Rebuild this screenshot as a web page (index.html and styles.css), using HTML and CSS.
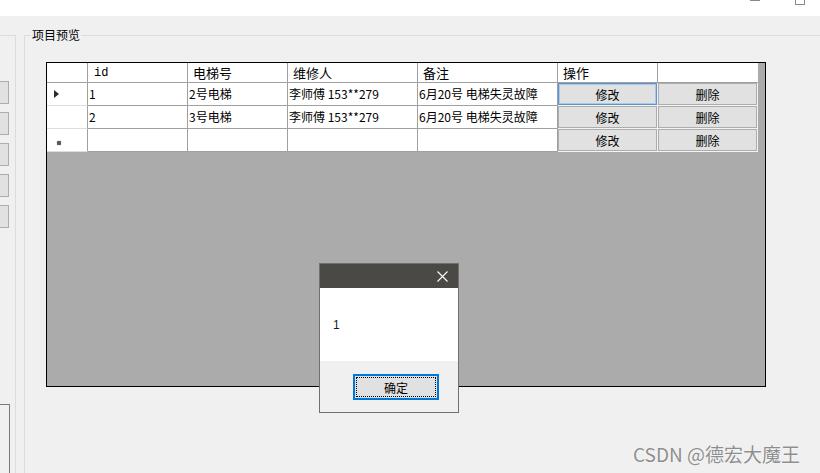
FILE: index.html
```html
<!DOCTYPE html>
<html>
<head>
    <meta charset="utf-8">
    <link rel="stylesheet" href="styles.css">
</head>
<body>
    <div class="window">
        <!-- Caption strip (window controls cut off at the top) -->
        <div class="caption">
            <span class="cap-min"></span>
            <span class="cap-max"></span>
        </div>

        <div class="workspace">
            <!-- Left panel, mostly off screen -->
            <div class="side-panel">
                <div class="side-buttons">
                    <span class="side-btn"></span>
                    <span class="side-btn"></span>
                    <span class="side-btn"></span>
                    <span class="side-btn"></span>
                    <span class="side-btn"></span>
                </div>
                <div class="side-textbox"></div>
            </div>

            <!-- Group box with the data grid -->
            <div class="group-box">
                <div class="group-title">项目预览</div>
                <div class="grid-view">
                    <div class="grid-row grid-header">
                        <div class="cell row-head"></div>
                        <div class="cell mono">id</div>
                        <div class="cell">电梯号</div>
                        <div class="cell">维修人</div>
                        <div class="cell">备注</div>
                        <div class="cell">操作</div>
                        <div class="cell last"></div>
                    </div>
                    <div class="grid-row">
                        <div class="cell row-head"><span class="current-mark"></span></div>
                        <div class="cell">1</div>
                        <div class="cell">2号电梯</div>
                        <div class="cell">李师傅 153**279</div>
                        <div class="cell">6月20号 电梯失灵故障</div>
                        <div class="cell btn-cell"><button class="grid-btn focused">修改</button></div>
                        <div class="cell btn-cell"><button class="grid-btn">删除</button></div>
                    </div>
                    <div class="grid-row">
                        <div class="cell row-head"></div>
                        <div class="cell">2</div>
                        <div class="cell">3号电梯</div>
                        <div class="cell">李师傅 153**279</div>
                        <div class="cell">6月20号 电梯失灵故障</div>
                        <div class="cell btn-cell"><button class="grid-btn">修改</button></div>
                        <div class="cell btn-cell"><button class="grid-btn">删除</button></div>
                    </div>
                    <div class="grid-row">
                        <div class="cell row-head"><span class="new-mark"></span></div>
                        <div class="cell"></div>
                        <div class="cell"></div>
                        <div class="cell"></div>
                        <div class="cell"></div>
                        <div class="cell btn-cell"><button class="grid-btn">修改</button></div>
                        <div class="cell btn-cell"><button class="grid-btn">删除</button></div>
                    </div>
                </div>
            </div>
        </div>

        <!-- MessageBox.Show("1") -->
        <div class="msg-box">
            <div class="msg-title">
                <svg width="11" height="11" viewBox="0 0 11 11">
                    <path d="M0.5 0.5 L10.5 10.5 M10.5 0.5 L0.5 10.5" stroke="#fff" stroke-width="1.1" fill="none"/>
                </svg>
            </div>
            <div class="msg-body">1</div>
            <div class="msg-footer">
                <button class="msg-btn"><span>确定</span></button>
            </div>
        </div>

        <div class="watermark">CSDN @德宏大魔王</div>
    </div>
</body>
</html>
```

FILE: styles.css
```css
body {
    margin: 0;
    background: #f0f0f0;
    font-family: "Noto Sans CJK SC", "Noto Sans", sans-serif;
    font-size: 12px;
    line-height: 16px;
    color: #000;
}

.window {
    position: relative;
    width: 820px;
    height: 473px;
    overflow: hidden;
}

/* caption strip */
.caption {
    height: 16px;
    background: #fff;
    display: flex;
    align-items: flex-start;
    justify-content: flex-end;
    padding-right: 15px;
}

.cap-min {
    width: 10px;
    height: 1px;
    background: #8a8a8a;
    margin-right: 35px;
}

.cap-max {
    width: 10px;
    height: 10px;
    margin-top: -5px;
    border: 1px solid #8a8a8a;
    box-sizing: border-box;
}

.workspace {
    display: flex;
    height: 457px;
    padding-top: 19px;
    box-sizing: border-box;
}

/* left panel */
.side-panel {
    width: 16px;
    flex-shrink: 0;
    border-top: 1px solid #dcdcdc;
    border-right: 1px solid #dcdcdc;
    box-sizing: border-box;
    display: flex;
    flex-direction: column;
}

.side-buttons {
    display: flex;
    flex-direction: column;
    gap: 8px;
    padding-top: 45px;
}

.side-btn {
    display: block;
    width: 9px;
    height: 23px;
    box-sizing: border-box;
    background: #e1e1e1;
    border: 1px solid #adadad;
    border-left: none;
}

.side-textbox {
    margin-top: auto;
    width: 10px;
    height: 69px;
    box-sizing: border-box;
    border-top: 1px solid #7a7a7a;
    border-right: 1px solid #7a7a7a;
}

/* group box */
.group-box {
    flex: 1;
    margin-left: 8px;
    margin-right: -20px;
    margin-bottom: -20px;
    border: 1px solid #dcdcdc;
}

.group-title {
    width: fit-content;
    margin: -9px 0 0 6px;
    padding: 0 1px;
    background: #f0f0f0;
}

/* data grid */
.grid-view {
    width: 720px;
    height: 325px;
    margin: 19px 0 0 21px;
    box-sizing: border-box;
    border: 1px solid #000;
    background: #ababab;
}

.grid-row {
    display: grid;
    grid-template-columns: 41px 100px 100px 130px 140px 100px 100px;
    height: 23px;
}

.grid-row.grid-header {
    height: 20px;
}

.cell {
    box-sizing: border-box;
    display: flex;
    align-items: center;
    padding: 0 1px;
    background: #fff;
    border-right: 1px solid #a0a0a0;
    border-bottom: 1px solid #a0a0a0;
    white-space: nowrap;
    overflow: hidden;
}

.grid-header .cell {
    padding-left: 5px;
    font-size: 13px;
}

.grid-header .cell.mono {
    padding-left: 6px;
    font-family: "Liberation Mono", monospace;
    font-size: 12px;
}

.grid-header .cell.last {
    border-right: none;
}

.cell.row-head {
    padding-left: 7px;
    border-bottom-color: #dedede;
}

.grid-header .cell.row-head {
    border-bottom-color: #a0a0a0;
}

.current-mark {
    width: 0;
    height: 0;
    border-left: 5px solid #2b2b2b;
    border-top: 4px solid transparent;
    border-bottom: 4px solid transparent;
}

.new-mark {
    width: 4px;
    height: 4px;
    margin: 6px 0 0 3px;
    border-radius: 1px;
    background: #5a5a5a;
    box-shadow: 0 0 1px #5a5a5a;
}

.cell.btn-cell {
    padding: 0;
    border-right-color: #f4f4f4;
    border-bottom-color: #f4f4f4;
}

.grid-btn {
    width: 100%;
    height: 100%;
    margin: 0;
    padding: 0;
    border: 1px solid #adadad;
    background: #e1e1e1;
    font-family: inherit;
    font-size: 12px;
    color: #000;
}

.grid-btn.focused {
    border-color: #5f93cc;
    box-shadow: inset 0 0 0 1px #a9c9ea;
}

/* message box */
.msg-box {
    position: absolute;
    left: 319px;
    top: 263px;
    width: 140px;
    height: 150px;
    box-sizing: border-box;
    border: 1px solid #707070;
    background: #f0f0f0;
    display: flex;
    flex-direction: column;
}

.msg-title {
    height: 24px;
    background: #4b4946;
    display: flex;
    align-items: center;
    justify-content: flex-end;
    padding-right: 10px;
}

.msg-body {
    height: 73px;
    background: #fff;
    display: flex;
    align-items: center;
    padding-left: 13px;
    font-family: "Liberation Sans", sans-serif;
    font-size: 12px;
    color: #1a1a2a;
}

.msg-footer {
    flex: 1;
    padding: 13px 0 0 33px;
}

.msg-btn {
    width: 86px;
    height: 26px;
    margin: 0;
    padding: 1px;
    box-sizing: border-box;
    border: 2px solid #0078d7;
    background: #e1e1e1;
    font-family: inherit;
    font-size: 12px;
    color: #000;
}

.msg-btn span {
    display: flex;
    align-items: center;
    justify-content: center;
    height: 100%;
    border: 1px dotted #000;
    box-sizing: border-box;
}

.watermark {
    position: absolute;
    left: 633px;
    top: 442px;
    font-size: 19px;
    line-height: 24px;
    color: #8e8e8e;
    text-shadow: 0 0 1px #fff, 0 0 1px #fff;
    white-space: nowrap;
}
```
